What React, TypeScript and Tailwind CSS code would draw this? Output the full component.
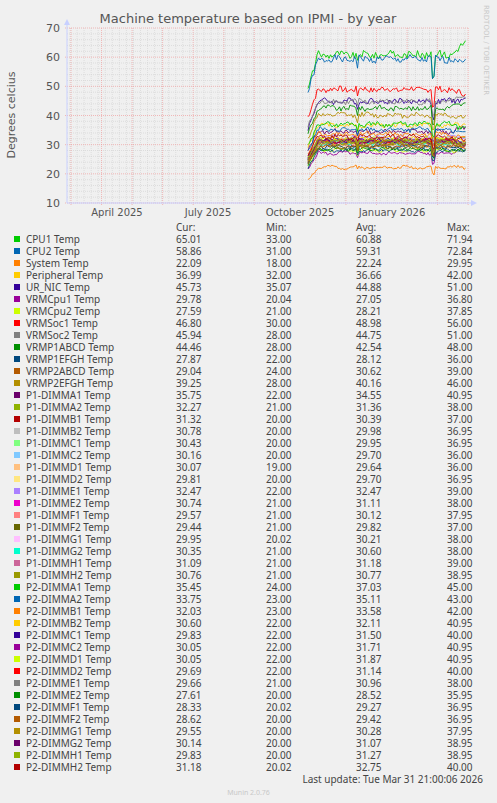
import React from "react";

const palette = [
  "#00CC00", "#0066B3", "#FF8000", "#FFCC00", "#330099", "#990099", "#CCFF00", "#FF0000", "#808080",
  "#008F00", "#00487D", "#B35A00", "#B38F00", "#6B006B", "#8FB300", "#B30000", "#BEBEBE", "#80FF80",
  "#80C9FF", "#FFC080", "#FFE680", "#AA80FF", "#EE00CC", "#FF8080", "#666600", "#FFBFFF", "#00FFCC",
  "#CC6699", "#999900",
];

const rows: [string, string, string, string, string][] = [
  ["CPU1 Temp", "65.01", "33.00", "60.88", "71.94"],
  ["CPU2 Temp", "58.86", "31.00", "59.31", "72.84"],
  ["System Temp", "22.09", "18.00", "22.24", "29.95"],
  ["Peripheral Temp", "36.99", "32.00", "36.66", "42.00"],
  ["UR_NIC Temp", "45.73", "35.07", "44.88", "51.00"],
  ["VRMCpu1 Temp", "29.78", "20.04", "27.05", "36.80"],
  ["VRMCpu2 Temp", "27.59", "21.00", "28.21", "37.85"],
  ["VRMSoc1 Temp", "46.80", "30.00", "48.98", "56.00"],
  ["VRMSoc2 Temp", "45.94", "28.00", "44.75", "51.00"],
  ["VRMP1ABCD Temp", "44.46", "28.00", "42.54", "48.00"],
  ["VRMP1EFGH Temp", "27.87", "22.00", "28.12", "36.00"],
  ["VRMP2ABCD Temp", "29.04", "24.00", "30.62", "39.00"],
  ["VRMP2EFGH Temp", "39.25", "28.00", "40.16", "46.00"],
  ["P1-DIMMA1 Temp", "35.75", "22.00", "34.55", "40.95"],
  ["P1-DIMMA2 Temp", "32.27", "21.00", "31.36", "38.00"],
  ["P1-DIMMB1 Temp", "31.32", "20.00", "30.39", "37.00"],
  ["P1-DIMMB2 Temp", "30.78", "20.00", "29.98", "36.95"],
  ["P1-DIMMC1 Temp", "30.43", "20.00", "29.95", "36.95"],
  ["P1-DIMMC2 Temp", "30.16", "20.00", "29.70", "36.00"],
  ["P1-DIMMD1 Temp", "30.07", "19.00", "29.64", "36.00"],
  ["P1-DIMMD2 Temp", "29.81", "20.00", "29.70", "36.95"],
  ["P1-DIMME1 Temp", "32.47", "22.00", "32.47", "39.00"],
  ["P1-DIMME2 Temp", "30.74", "21.00", "31.11", "38.00"],
  ["P1-DIMMF1 Temp", "29.57", "21.00", "30.12", "37.95"],
  ["P1-DIMMF2 Temp", "29.44", "21.00", "29.82", "37.00"],
  ["P1-DIMMG1 Temp", "29.95", "20.02", "30.21", "38.00"],
  ["P1-DIMMG2 Temp", "30.35", "21.00", "30.60", "38.00"],
  ["P1-DIMMH1 Temp", "31.09", "21.00", "31.18", "39.00"],
  ["P1-DIMMH2 Temp", "30.76", "21.00", "30.77", "38.95"],
  ["P2-DIMMA1 Temp", "35.45", "24.00", "37.03", "45.00"],
  ["P2-DIMMA2 Temp", "33.75", "23.00", "35.11", "43.00"],
  ["P2-DIMMB1 Temp", "32.03", "23.00", "33.58", "42.00"],
  ["P2-DIMMB2 Temp", "30.60", "22.00", "32.11", "40.95"],
  ["P2-DIMMC1 Temp", "29.83", "22.00", "31.50", "40.00"],
  ["P2-DIMMC2 Temp", "30.05", "22.00", "31.71", "40.95"],
  ["P2-DIMMD1 Temp", "30.05", "22.00", "31.87", "40.95"],
  ["P2-DIMMD2 Temp", "29.69", "22.00", "31.14", "40.00"],
  ["P2-DIMME1 Temp", "29.66", "21.00", "30.96", "38.00"],
  ["P2-DIMME2 Temp", "27.61", "20.00", "28.52", "35.95"],
  ["P2-DIMMF1 Temp", "28.33", "20.02", "29.27", "36.95"],
  ["P2-DIMMF2 Temp", "28.62", "20.00", "29.42", "36.95"],
  ["P2-DIMMG1 Temp", "29.55", "20.00", "30.28", "37.95"],
  ["P2-DIMMG2 Temp", "30.14", "20.00", "31.07", "38.95"],
  ["P2-DIMMH1 Temp", "29.83", "20.00", "31.27", "38.95"],
  ["P2-DIMMH2 Temp", "31.18", "20.02", "32.75", "40.00"],
];

const X0 = 67, X1 = 468, Y0 = 28, Y1 = 203;
const yOf = (v: number) => Y1 - ((v - 10) / 60) * (Y1 - Y0);

function profile(x: number) {
  let f = 0;
  if (x < 318) f -= ((318 - x) / 10) * 0.2;
  if (x > 356 && x < 359) f -= 0.05;
  if (x > 432 && x < 435) f -= 0.12;
  return f;
}

function seriesPath(i: number) {
  const [, cur, , avg] = rows[i];
  const a = parseFloat(avg);
  const c = parseFloat(cur);
  let seed = i * 9301 + 49297;
  const rnd = () => {
    seed = (seed * 9301 + 49297) % 233280;
    return seed / 233280 - 0.5;
  };
  const pts: string[] = [];
  for (let x = 308; x <= 466; x += 1.5) {
    const t = (x - 308) / 158;
    const base = x > 450 ? a + (c - a) * ((x - 450) / 16) : a;
    const v = base * (1 + profile(x)) + rnd() * (a / 25) + Math.sin(t * 40 + i) * 0.4;
    pts.push(`${x.toFixed(1)},${yOf(v).toFixed(1)}`);
  }
  return "M" + pts.join(" L");
}

function Chart() {
  const majorX: number[] = [];
  for (let x = 71; x <= 469; x += 30.55) majorX.push(x);
  const minorX: number[] = [];
  for (let x = 70; x < 468; x += 7.05) minorX.push(x);
  const minorY: number[] = [];
  for (let v = 12; v < 70; v += 2) if (v % 10) minorY.push(yOf(v));
  const labels = [
    ["April 2025", 117],
    ["July 2025", 208],
    ["October 2025", 300],
    ["January 2026", 392],
  ] as const;
  return (
    <svg width={497} height={222} style={{ fontFamily: "'DejaVu Sans', sans-serif" }}>
      <text x={248} y={23} textAnchor="middle" fontSize={13} fill="#555">
        Machine temperature based on IPMI - by year
      </text>
      <text transform="translate(15,115) rotate(-90)" textAnchor="middle" fontSize={11} fill="#555">
        Degrees celcius
      </text>
      <text transform="translate(484,5) rotate(90)" fontSize={7} fill="#c8c8c8">
        RRDTOOL / TOBI OETIKER
      </text>
      {minorX.map((x) => (
        <line key={"mx" + x} x1={x} x2={x} y1={Y0} y2={Y1} stroke="#d0d0d0" strokeWidth={0.6} strokeDasharray="1 1" />
      ))}
      {minorY.map((y) => (
        <line key={"my" + y} x1={X0} x2={X1} y1={y} y2={y} stroke="#d0d0d0" strokeWidth={0.6} strokeDasharray="1 1" />
      ))}
      {majorX.map((x) => (
        <line key={"Mx" + x} x1={x} x2={x} y1={Y0} y2={Y1 + 2} stroke="#f09090" strokeWidth={0.6} strokeDasharray="1 1" />
      ))}
      {[10, 20, 30, 40, 50, 60, 70].map((v) => (
        <g key={v}>
          <line x1={X0 - 2} x2={X1} y1={yOf(v)} y2={yOf(v)} stroke="#f09090" strokeWidth={0.6} strokeDasharray="1 1" />
          <text x={X0 - 7} y={yOf(v) + 4} textAnchor="end" fontSize={11} fill="#555">
            {v}
          </text>
        </g>
      ))}
      {labels.map(([l, x]) => (
        <text key={l} x={x} y={216} textAnchor="middle" fontSize={10} fill="#555">
          {l}
        </text>
      ))}
      {rows.map((_, i) => (
        <path key={i} d={seriesPath(i)} fill="none" stroke={palette[i % palette.length]} strokeWidth={0.9} />
      ))}
      <line x1={X0} x2={X0} y1={Y1} y2={Y0 - 5} stroke="#c8d0ff" />
      <line x1={X0} x2={X1 + 5} y1={Y1} y2={Y1} stroke="#c8d0ff" />
      <path d={`M${X0 - 3},${Y0 - 3} L${X0 + 3},${Y0 - 3} L${X0},${Y0 - 9} Z`} fill="#c8d0ff" />
      <path d={`M${X1 + 3},${Y1 - 3} L${X1 + 3},${Y1 + 3} L${X1 + 9},${Y1} Z`} fill="#c8d0ff" />
    </svg>
  );
}

export default function App() {
  return (
    <div className="w-[497px] h-[803px] bg-[#f0f0f0] overflow-hidden">
      <Chart />
      <div className="font-['DejaVu_Sans_Mono'] text-[10px] leading-[12px] text-[#444]">
        <div className="flex -mt-[1px]">
          <span className="ml-[176px] w-[90px]">Cur:</span>
          <span className="w-[90px]">Min:</span>
          <span className="w-[91px]">Avg:</span>
          <span>Max:</span>
        </div>
        {rows.map((r, i) => (
          <div key={r[0]} className="flex items-center">
            <span
              className="ml-[14px] mr-[6px] w-[6px] h-[6px]"
              style={{ backgroundColor: palette[i % palette.length] }}
            />
            <span className="w-[150px]">{r[0]}</span>
            <span className="w-[90px]">{r[1]}</span>
            <span className="w-[90px]">{r[2]}</span>
            <span className="w-[91px]">{r[3]}</span>
            <span>{r[4]}</span>
          </div>
        ))}
        <div className="text-right pr-[14px]">Last update: Tue Mar 31 21:00:06 2026</div>
        <div className="text-center font-['DejaVu_Sans'] text-[7px] text-[#c8c8c8] mt-[2px]">
          Munin 2.0.76
        </div>
      </div>
    </div>
  );
}
